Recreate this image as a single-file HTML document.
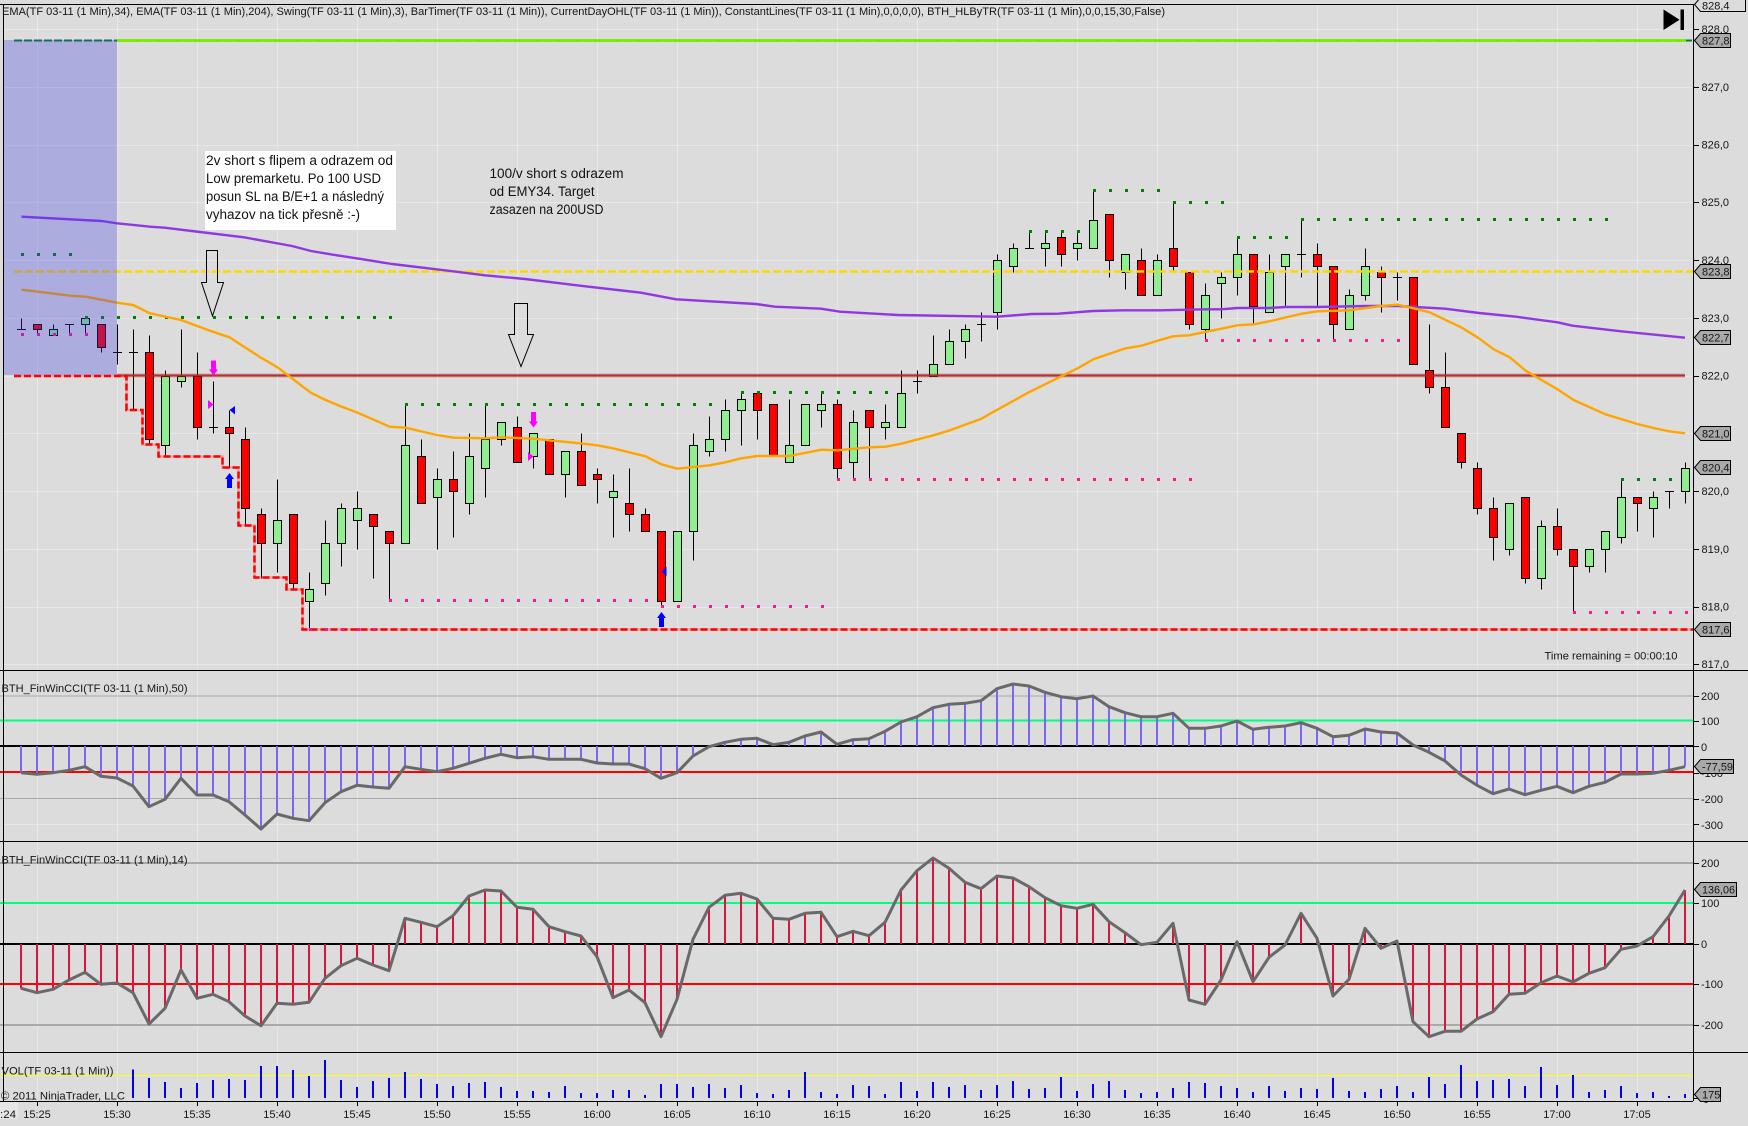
<!DOCTYPE html>
<html><head><meta charset="utf-8"><title>Chart</title>
<style>
html,body{margin:0;padding:0;background:#dcdcdc;width:1748px;height:1126px;overflow:hidden}
svg{display:block;position:absolute;left:0;top:0}
text{font-family:"Liberation Sans",sans-serif;font-size:11px;fill:#151515}
.n{font-size:13.5px;fill:#111}
.t{text-anchor:middle}
.tag{fill:#a9a9a9;stroke:#000;stroke-width:1}
</style></head><body>
<svg width="1748" height="1126" viewBox="0 0 1748 1126" xmlns="http://www.w3.org/2000/svg">
<rect width="1748" height="1126" fill="#dcdcdc"/>
<g id="s"></g>
<!-- annotations -->
<rect x="205" y="151" width="191" height="79" fill="#fff"/>
<text class="n" x="206" y="165" textLength="187" lengthAdjust="spacingAndGlyphs">2v short s flipem a odrazem od</text>
<text class="n" x="206" y="183" textLength="175" lengthAdjust="spacingAndGlyphs">Low premarketu. Po 100 USD</text>
<text class="n" x="206" y="201" textLength="178" lengthAdjust="spacingAndGlyphs">posun SL na B/E+1 a následný</text>
<text class="n" x="206" y="219" textLength="154" lengthAdjust="spacingAndGlyphs">vyhazov na tick přesně :-)</text>
<text class="n" x="489.5" y="178" textLength="134" lengthAdjust="spacingAndGlyphs">100/v short s odrazem</text>
<text class="n" x="489.5" y="196" textLength="105" lengthAdjust="spacingAndGlyphs">od EMY34. Target</text>
<text class="n" x="489.5" y="214" textLength="114" lengthAdjust="spacingAndGlyphs">zasazen na 200USD</text>
<path d="M206.5 250.5H217.5V282.5H223.5L212.5 316L201.5 282.5H206.5Z" fill="none" stroke="#000"/>
<path d="M514.5 303.5H527.5V334.5H533.5L521 366.5L508.5 334.5H514.5Z" fill="none" stroke="#000"/>
<!-- legends -->
<text x="2" y="15" textLength="1163" lengthAdjust="spacingAndGlyphs">EMA(TF 03-11 (1 Min),34), EMA(TF 03-11 (1 Min),204), Swing(TF 03-11 (1 Min),3), BarTimer(TF 03-11 (1 Min)), CurrentDayOHL(TF 03-11 (1 Min)), ConstantLines(TF 03-11 (1 Min),0,0,0,0), BTH_HLByTR(TF 03-11 (1 Min),0,0,15,30,False)</text>
<text x="1544.5" y="659.5" textLength="133" lengthAdjust="spacingAndGlyphs">Time remaining = 00:00:10</text>
<text x="1.5" y="692" textLength="186" lengthAdjust="spacingAndGlyphs">BTH_FinWinCCI(TF 03-11 (1 Min),50)</text>
<text x="1.5" y="863.5" textLength="186" lengthAdjust="spacingAndGlyphs">BTH_FinWinCCI(TF 03-11 (1 Min),14)</text>
<text x="1.5" y="1074.5" textLength="112" lengthAdjust="spacingAndGlyphs">VOL(TF 03-11 (1 Min))</text>
<text x="1" y="1099.5" textLength="124" lengthAdjust="spacingAndGlyphs">© 2011 NinjaTrader, LLC</text>
<!-- skip button -->
<path d="M1663.5 9.5L1679.5 19.7L1663.5 30Z" fill="#000"/><rect x="1680.5" y="9.5" width="3.5" height="20.5" fill="#000"/>
<!-- price axis -->
<g>
<text x="1701.5" y="33">828,0</text><text x="1701.5" y="91">827,0</text><text x="1701.5" y="148.5">826,0</text><text x="1701.5" y="206">825,0</text><text x="1701.5" y="264">824,0</text><text x="1701.5" y="322">823,0</text><text x="1701.5" y="379.5">822,0</text><text x="1701.5" y="495">820,0</text><text x="1701.5" y="553">819,0</text><text x="1701.5" y="610.5">818,0</text><text x="1701.5" y="668">817,0</text>
<text x="1701" y="700">200</text><text x="1701" y="725">100</text><text x="1701" y="751">0</text><text x="1701" y="777">-100</text><text x="1701" y="803">-200</text><text x="1701" y="829">-300</text>
<text x="1701" y="867">200</text><text x="1701" y="907">100</text><text x="1701" y="948">0</text><text x="1701" y="988">-100</text><text x="1701" y="1029">-200</text>
<text x="1703" y="1103">0</text>
</g>
<!-- tags -->
<path d="M1694.5 4.5L1700.5 -2.5H1745.5V11.5H1700.5Z" fill="#dcdcdc" stroke="#000"/><text x="1702" y="9.5">828,4</text>
<path class="tag" d="M1694.5 40.5L1700.5 33.5H1730.5V47.5H1700.5Z"/><text x="1702" y="44.5">827,8</text>
<path class="tag" d="M1694.5 271.5L1700.5 264.5H1730.5V278.5H1700.5Z"/><text x="1702" y="275.5">823,8</text>
<path class="tag" d="M1694.5 337.5L1700.5 330.5H1730.5V344.5H1700.5Z"/><text x="1702" y="341.5">822,7</text>
<path class="tag" d="M1694.5 433.5L1700.5 426.5H1730.5V440.5H1700.5Z"/><text x="1702" y="437.5">821,0</text>
<path class="tag" d="M1694.5 467.5L1700.5 460.5H1730.5V474.5H1700.5Z"/><text x="1702" y="471.5">820,4</text>
<path class="tag" d="M1694.5 629.5L1700.5 622.5H1730.5V636.5H1700.5Z"/><text x="1702" y="633.5">817,6</text>
<path class="tag" d="M1694.5 766.5L1700.5 759.5H1733.5V773.5H1700.5Z"/><text x="1702" y="770.5" textLength="31" lengthAdjust="spacingAndGlyphs">-77,59</text>
<path class="tag" d="M1694.5 889.5L1700.5 882.5H1736.5V896.5H1700.5Z"/><text x="1702" y="893.5" textLength="33" lengthAdjust="spacingAndGlyphs">136,06</text>
<path class="tag" d="M1694.5 1094.5L1700.5 1087.5H1720.5V1101.5H1700.5Z"/><text x="1702" y="1098.5">175</text>
<!-- time axis -->
<rect x="0" y="1102" width="18" height="17" fill="#e6e6e6"/>
<text x="0" y="1118" textLength="16" lengthAdjust="spacingAndGlyphs">:24</text>
<g>
<text class="t" x="37" y="1118">15:25</text><text class="t" x="117" y="1118">15:30</text><text class="t" x="197" y="1118">15:35</text><text class="t" x="277" y="1118">15:40</text><text class="t" x="357" y="1118">15:45</text><text class="t" x="437" y="1118">15:50</text><text class="t" x="517" y="1118">15:55</text><text class="t" x="597" y="1118">16:00</text><text class="t" x="677" y="1118">16:05</text><text class="t" x="757" y="1118">16:10</text><text class="t" x="837" y="1118">16:15</text><text class="t" x="917" y="1118">16:20</text><text class="t" x="997" y="1118">16:25</text><text class="t" x="1077" y="1118">16:30</text><text class="t" x="1157" y="1118">16:35</text><text class="t" x="1237" y="1118">16:40</text><text class="t" x="1317" y="1118">16:45</text><text class="t" x="1397" y="1118">16:50</text><text class="t" x="1477" y="1118">16:55</text><text class="t" x="1557" y="1118">17:00</text><text class="t" x="1637" y="1118">17:05</text>
</g>
</svg>
<script>
(function(){
var o=[];
function L(x1,y1,x2,y2,c,w,ex){o.push('<line x1="'+x1+'" y1="'+y1+'" x2="'+x2+'" y2="'+y2+'" stroke="'+c+'" stroke-width="'+(w||1)+'" '+(ex||'shape-rendering="crispEdges"')+'/>');}
function R(x,y,w,h,f,ex){o.push('<rect x="'+x+'" y="'+y+'" width="'+w+'" height="'+h+'" fill="'+f+'" '+(ex||'')+'/>');}
function PL(p,c,w){o.push('<polyline points="'+p+'" fill="none" stroke="'+c+'" stroke-width="'+w+'" stroke-linejoin="round"/>');}
var X=function(i){return 37.5+16*i};
var PY=function(v){return Math.round(29+(280-v)*5.775)+.5};
var i,n;
/* grid */
for(i=0;i<=20;i++){L(37.5+80*i,5,37.5+80*i,1101,'#e7e7e7');L(37.5+80*i,1101,37.5+80*i,1106,'#000');}
[29,86.75,144.5,202.25,260,317.75,375.5,433.25,491,548.75,606.5,664.25].forEach(function(y){var r=Math.round(y)+.5;L(4,r,1693,r,'#e7e7e7');L(1693,r,1699,r,'#000');});
L(4,824.5,1693,824.5,'#e7e7e7');
/* candles */
var b="d228,228,230,228 r229,228,229,227 g228,227,229,227 d229,229,229,227 g230,229,230,227 r229,225,229,224 d224,224,229,222 d224,224,228,214 r224,209,227,208 g220,208,221,206 g220,219,228,218 r220,211,224,209 d211,211,219,210 r211,210,214,204 r209,197,211,194 r196,191,197,185 g195,191,202,186 r196,184,196,183 g183,181,186,176 g191,184,195,182 g197,191,198,187 g197,195,200,190 r196,194,196,185 r193,191,193,181 g208,191,215,191 r206,198,209,198 g202,199,204,190 r202,200,207,192 g206,198,210,196 g209,204,215,199 g212,209,212,208 r211,205,213,205 g210,206,210,204 r209,203,209,203 g207,203,207,199 r207,201,210,201 r203,202,204,198 g200,199,203,192 r198,196,204,193 r196,193,197,193 r193,181,193,180 g193,181,193,181 g208,193,210,188 g209,207,213,206 g214,209,216,207 g216,214,217,208 r217,214,217,209 r215,206,215,206 g208,205,216,205 g215,208,215,208 g215,214,217,211 r215,204,216,202 g212,205,214,202 r214,211,214,202 g212,211,215,209 g217,211,221,211 d219,219,221,217 g222,220,227,220 g226,222,228,222 g228,226,229,223 d229,229,231,226 g240,231,241,228 g242,239,243,238 d242,242,245,242 g243,242,245,239 r244,241,245,239 g243,242,245,240 g247,242,252,242 r248,240,248,237 g241,238,241,235 r240,234,242,234 g240,234,241,234 r242,239,250,238 r238,229,238,228 g234,228,236,226 g237,236,238,230 g241,237,244,234 r241,232,241,229 g238,231,241,231 g241,239,241,232 d241,241,247,237 r241,239,243,232 r239,229,239,226 g234,228,235,228 g239,234,242,233 r238,237,239,231 d237,237,238,233 r237,222,237,222 r221,218,229,217 r218,211,224,211 r210,205,210,204 r204,197,205,196 r197,192,199,188 g198,190,198,189 r199,185,199,184 g194,185,195,183 r194,190,197,189 r190,187,190,179 g190,187,190,186 g193,190,193,186 g199,192,202,191 r199,198,199,193 g199,197,200,192 d200,200,200,197 g204,200,205,198".split(' ');
b.forEach(function(s,k){
 var t=s[0],a=s.slice(1).split(',').map(Number),x=X(k-1);
 if(a[2]!=a[3])L(x,PY(a[2]),x,PY(a[3]),'#000');
 if(t=='d'){L(x-4.5,PY(a[0]),x+4.5,PY(a[0]),'#000');}
 else{var y1=PY(a[0]),y2=PY(a[1]);R(x-4,y1,8,y2-y1,t=='r'?'#ff0000':'#90ee90','stroke="#000" stroke-width="1" shape-rendering="crispEdges"');}
});
/* levels */
L(14,40.5,1692,40.5,'#0a7a3a',2,'stroke-dasharray="8 2" shape-rendering="crispEdges"');
L(117,40.5,1686,40.5,'#7cf000',3,'opacity=".95"');
L(14,271.5,1693,271.5,'#ffd700',2.5,'stroke-dasharray="8 3"');
L(117,375.5,1685,375.5,'#b22222',3.5,'opacity=".55"');
L(117,375.5,1685,375.5,'#b22222',1.5,'opacity=".8"');
var stop='14,376 126.5,376 126.5,410 142.5,410 142.5,444.5 158.5,444.5 158.5,456.5 222.5,456.5 222.5,467.5 238.5,467.5 238.5,525.5 254.5,525.5 254.5,577.5 286.5,577.5 286.5,589.5 302.5,589.5 302.5,629.5 1693,629.5';
o.push('<polyline points="'+stop+'" fill="none" stroke="#ff4040" stroke-opacity=".35" stroke-width="2.5"/>');
o.push('<polyline points="'+stop+'" fill="none" stroke="#ff0000" stroke-width="2.5" stroke-dasharray="7 3"/>');
/* swing dots */
[[-1,2,254],[3,22,317],[23,42,404],[44,53,392],[62,65,231],[66,70,190],[71,74,202],[75,78,236.5],[79,98,219],[99,102,479]].forEach(function(d){for(i=d[0];i<=d[1];i++)R(X(i)-.5,Math.round(d[2])-1,3,3,'#008000');});
[[-1,3,334],[17,21,629],[22,38,600],[39,49,606],[50,72,479],[73,85,340],[96,103,612]].forEach(function(d){for(i=d[0];i<=d[1];i++)R(X(i)-.5,Math.round(d[2])-1,3,3,'#ff1493');});
/* EMAs */
PL('21.5,216.7 101.7,221 117,223.3 150,226.7 164.6,227.7 200,232 244,237.3 292,246 311,251 333,254.7 359,258.7 392,264 448,270.7 485,275.3 525,279 580,285.7 641,292.7 676,299.3 756,304 775,306.7 821,308.7 840,311.7 898,315 997,316.7 1031.6,314 1058,313.7 1093,311 1123,310.3 1160,310.3 1205,309.3 1221,309.3 1237.6,308 1269,308 1285.6,307 1317.5,307 1366,306 1398,306 1445,308.7 1479,313 1516,316.7 1557.5,322.3 1572.5,325.7 1621,331.3 1651,334.3 1685,337.7','#9138e0',2.4);
PL('21.5,289.7 70.3,295.7 85.8,296.7 117,302.7 133,305 150,313.3 181,320 212.7,331.7 229.4,337.3 261,357.7 277.5,367.3 310.8,392.7 325.6,400 340,406 359,413.3 389.6,426.7 405.5,427.7 436.6,435 453.6,437.7 485.4,438.3 501,437.3 532.7,438.7 580,443.3 597,445.3 613,448.3 645.5,456.3 661.4,464.3 677.3,468.7 709.5,465.3 725.4,462.3 741.3,458.3 757.6,456 789.4,456 821.6,449.7 837.5,450.3 869.3,447.3 885.6,446.7 901.5,443.7 933.3,435.3 950,430.3 981.4,418.7 997.3,409.7 1028.8,392.3 1077.6,368.3 1094,359 1125.7,348.3 1141.6,345.7 1160,340 1173,336.3 1189,335.3 1237.6,325.3 1253.7,324.3 1269.5,321.3 1301.7,313.7 1317.5,311.3 1349.4,310.3 1381,306 1397.3,304.7 1413.5,308.3 1429.6,312.3 1461.8,327.7 1478,337.7 1493.7,349.3 1509.8,357.3 1525.6,370.7 1557.5,389.3 1573.6,400 1605.5,414.3 1637.3,424 1653.5,428 1669.2,431.3 1685,433.3','#ffa500',2.4);
/* markers */
function ad(c,t,bb,col){o.push('<path d="M'+(c-2.5)+' '+t+'H'+(c+2.5)+'V'+(bb-6)+'H'+(c+4.5)+'L'+c+' '+bb+'L'+(c-4.5)+' '+(bb-6)+'H'+(c-2.5)+'Z" fill="'+col+'"/>');}
function au(c,t,bb,col){o.push('<path d="M'+(c-2.5)+' '+bb+'H'+(c+2.5)+'V'+(t+6)+'H'+(c+4.5)+'L'+c+' '+t+'L'+(c-4.5)+' '+(t+6)+'H'+(c-2.5)+'Z" fill="'+col+'"/>');}
ad(213.5,360.5,375.5,'#ff00ff');ad(533.5,412,427.5,'#ff00ff');
au(229.5,473,488,'#0000ff');au(661.5,612,627,'#0000ff');
o.push('<path d="M208 400L213.5 404.5L208 409Z" fill="#ff00ff"/><path d="M528 452L533.5 456.5L528 461Z" fill="#ff00ff"/><path d="M235 406V414.5L229.5 410Z" fill="#0000ff"/><path d="M666.5 566.5V576.5L661.5 571.5Z" fill="#0000ff"/>');
/* blue overlay */
R(3.5,40,113.5,335,'rgb(63,63,233)','opacity=".3"');
/* CCI levels */
function lv(y,c,w){L(0,y,1693,y,c,w);}
[[696,720.5,746,772,798.5],[863,903,944,984,1025]].forEach(function(a,ix){
 var gw=ix?2:1;
 lv(a[0],'#a9a9a9',gw);lv(a[4],'#a9a9a9',gw);lv(a[1],'#00ff7f',2);lv(a[3],'#ff0000',2);
});
lv(746,'#000',2);lv(944,'#000',2);
[696,721,746,773,799,824,863,903,944,984,1025].forEach(function(y){L(1693,y+.5,1699,y+.5,'#000');});
L(1693,1098.5,1699,1098.5,'#000');
var c50=[338,343,338,331,320,349,354,378,440,418,355,405,405,425,465,507,462,475,482,428,395,376,381,385,320,328,335,325,310,295,283,293,290,298,298,298,309,312,312,326,355,338,288,260,247,238,235,254,247,228,216,253,239,236,214,186,170,143,133,130,122,86,72,78,97,110,116,108,140,158,170,170,160,205,205,198,183,208,202,198,188,205,230,226,207,216,219,255,277,303,345,376,401,387,404,391,379,398,379,367,342,342,340,331,320];
var c14=[985,998,988,960,937,973,969,998,1092,1045,930,1015,1003,1025,1068,1097,1030,1033,1027,955,917,895,915,932,775,787,800,767,708,690,693,742,748,800,815,828,890,1013,990,1028,1130,1018,838,742,706,700,717,775,778,760,757,830,814,827,787,690,632,594,625,667,686,648,654,680,713,737,745,733,785,818,854,847,790,1020,1033,960,845,965,892,855,760,835,1008,958,805,865,843,1085,1130,1114,1114,1077,1055,1003,1000,968,948,966,940,923,868,858,830,768,690];
function cci(arr,zero,col){
 var pts=[];
 arr.forEach(function(Y,k){var x=X(k-1)-.5,y=660+Y/3;L(x,zero,x,y,col,2);pts.push(x+','+y.toFixed(1));});
 PL(pts.join(' '),'#696969',3);
}
cci(c50,746,'#7b68ee');cci(c14,944,'#dc143c');
/* volume */
L(0,1075.5,1693,1075.5,'#ffff00');
var v=[1228,1254,1266,1284,1269,1260,1257,1260,1218,1218,1230,1248,1200,1260,1281,1263,1254,1236,1257,1272,1278,1269,1266,1281,1293,1293,1296,1278,1299,1299,1290,1290,1305,1272,1272,1281,1272,1284,1275,1299,1302,1290,1236,1296,1302,1275,1278,1302,1266,1293,1266,1281,1275,1290,1275,1263,1287,1284,1251,1293,1272,1263,1290,1299,1296,1284,1266,1269,1278,1284,1296,1278,1293,1284,1287,1254,1293,1296,1287,1278,1296,1251,1272,1215,1263,1260,1257,1278,1221,1275,1245,1296,1290,1278,1299,1296,1308,1302];
v.forEach(function(Y,k){var x=X(k+6)-.5;L(x,1098,x,660+Y/3,'#0000ff',2);});
/* frame */
L(0,4.5,1693,4.5,'#000');L(3.5,4,3.5,1101,'#000');L(1693.5,4,1693.5,1101,'#000');
L(0,670.5,1748,670.5,'#000');L(0,841.5,1748,841.5,'#000');L(0,1052.5,1748,1052.5,'#000');L(0,1101.5,1693,1101.5,'#000');
document.getElementById('s').innerHTML=o.join('');
})();
</script>
</body></html>
